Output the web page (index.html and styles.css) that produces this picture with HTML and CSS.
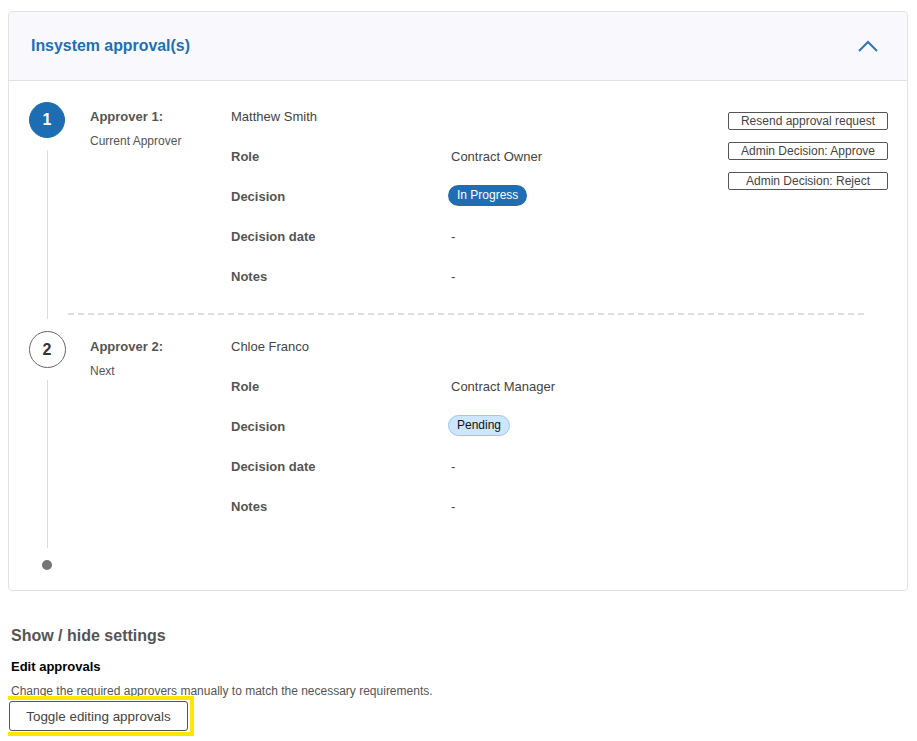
FILE: index.html
```html
<!DOCTYPE html>
<html>
    <head>
        <title>Insystem approvals</title>
        <link rel="stylesheet" href="styles.css">
    </head>
    <body>
        <div class="card">
            <div class="card-header">
                <h2 class="card-title">Insystem approval(s)</h2>
                <svg class="chevron" width="20" height="12" viewBox="0 0 20 12">
                    <polyline points="1,11 10,2 19,11" fill="none" stroke="#2f76bb" stroke-width="2" />
                </svg>
            </div>
            <div class="card-body">
                <div class="step">
                    <div class="step-track">
                        <div class="step-num current">1</div>
                        <div class="step-line"></div>
                    </div>
                    <div class="step-main">
                        <div class="step-content">
                            <div class="approver">
                                <div class="approver-title">Approver 1:</div>
                                <div class="approver-sub">Current Approver</div>
                            </div>
                            <div class="details">
                                <div class="detail-name">Matthew Smith</div>
                                <div></div>
                                <div class="detail-key">Role</div>
                                <div class="detail-val">Contract Owner</div>
                                <div class="detail-key">Decision</div>
                                <div class="detail-val"><span class="pill pill-progress">In Progress</span></div>
                                <div class="detail-key">Decision date</div>
                                <div class="detail-val">-</div>
                                <div class="detail-key">Notes</div>
                                <div class="detail-val">-</div>
                            </div>
                            <div class="actions">
                                <button class="btn-small">Resend approval request</button>
                                <button class="btn-small">Admin Decision: Approve</button>
                                <button class="btn-small">Admin Decision: Reject</button>
                            </div>
                        </div>
                        <div class="step-divider"></div>
                    </div>
                </div>
                <div class="step step-last">
                    <div class="step-track">
                        <div class="step-num">2</div>
                        <div class="step-line"></div>
                    </div>
                    <div class="step-main">
                        <div class="step-content">
                            <div class="approver">
                                <div class="approver-title">Approver 2:</div>
                                <div class="approver-sub">Next</div>
                            </div>
                            <div class="details">
                                <div class="detail-name">Chloe Franco</div>
                                <div></div>
                                <div class="detail-key">Role</div>
                                <div class="detail-val">Contract Manager</div>
                                <div class="detail-key">Decision</div>
                                <div class="detail-val"><span class="pill pill-pending">Pending</span></div>
                                <div class="detail-key">Decision date</div>
                                <div class="detail-val">-</div>
                                <div class="detail-key">Notes</div>
                                <div class="detail-val">-</div>
                            </div>
                        </div>
                        <div class="step-divider"></div>
                    </div>
                </div>
                <div class="step-end"></div>
            </div>
        </div>

        <div class="settings">
            <h3 class="settings-title">Show / hide settings</h3>
            <h4 class="settings-sub">Edit approvals</h4>
            <p class="settings-text">Change the required approvers manually to match the necessary requirements.</p>
            <div class="focus-ring">
                <button class="btn-toggle">Toggle editing approvals</button>
            </div>
        </div>
    </body>
</html>
```

FILE: styles.css
```css
* {
    margin: 0;
    padding: 0;
    box-sizing: border-box;
}

body {
    margin: 11px 9px 0 8px;
    font-family: "Liberation Sans", Arial, sans-serif;
    color: #444;
    background: #fff;
}

.card {
    border: 1px solid #e2e2e2;
    border-radius: 4px;
}

.card-header {
    height: 69px;
    padding: 0 29px 0 22px;
    display: flex;
    align-items: center;
    justify-content: space-between;
    background: #f9f9fd;
    border-bottom: 1px solid #e2e2e2;
    border-radius: 4px 4px 0 0;
}
.card-title {
    font-size: 15.9px;
    font-weight: bold;
    color: #1f6fb5;
}
.chevron {
    display: block;
}

.card-body {
    padding: 21px 19px 20px 20px;
}

.step {
    display: flex;
}
.step-track {
    width: 36px;
    display: flex;
    flex-direction: column;
    align-items: center;
}
.step-num {
    width: 37px;
    height: 37px;
    border-radius: 50%;
    border: 1px solid #666;
    display: flex;
    align-items: center;
    justify-content: center;
    font-size: 16px;
    font-weight: bold;
    color: #333;
}
.step-num.current {
    width: 36px;
    height: 36px;
    background: #1d6db2;
    border-color: #1d6db2;
    color: #fff;
}
.step-line {
    flex: 1;
    width: 1px;
    margin: 12px 0;
    background: #dcdcdc;
}

.step-main {
    flex: 1;
    padding-left: 3px;
}
.step-content {
    display: flex;
    padding: 5px 0 0 22px;
    font-size: 13px;
    line-height: 20px;
}
.step-last .step-content {
    padding-top: 6px;
}
.step-divider {
    height: 2px;
    margin: 26px 20px 16px 0;
    background: repeating-linear-gradient(to right, #dddddd 0 6px, transparent 6px 10px);
}
.step-last .step-divider {
    margin-bottom: 15px;
    background: none;
}

.approver {
    width: 141px;
    color: #555;
}
.approver-title {
    font-weight: bold;
}
.approver-sub {
    margin-top: 4px;
    font-size: 12px;
}

.details {
    display: grid;
    grid-template-columns: 220px 200px;
    row-gap: 20px;
}
.detail-name {
    color: #444;
}
.detail-key {
    font-weight: bold;
    color: #555;
}
.detail-val {
    color: #444;
}

.pill {
    display: inline-block;
    margin: -2px 0 0 -3px;
    height: 21px;
    padding: 0 9px;
    border-radius: 11px;
    font-size: 12px;
    line-height: 21px;
    vertical-align: top;
}
.pill-progress {
    background: #1f6db3;
    color: #fff;
}
.pill-pending {
    background: #cde6fb;
    border: 1px solid #98c8ef;
    line-height: 19px;
    color: #111;
    padding: 0 8px;
}

.actions {
    margin-left: auto;
    margin-top: 5px;
    display: flex;
    flex-direction: column;
    gap: 12px;
}
.btn-small {
    width: 160px;
    height: 18px;
    background: #fff;
    border: 1px solid #555;
    border-radius: 2px;
    font-family: "Liberation Sans", Arial, sans-serif;
    font-size: 12px;
    color: #444;
}

.step-end {
    width: 10px;
    height: 10px;
    margin-left: 13px;
    border-radius: 50%;
    background: #757575;
}

.settings {
    margin: 35px 0 0 1px;
}
.settings-title {
    padding-left: 2px;
    font-size: 16px;
    line-height: 20px;
    color: #555;
}
.settings-sub {
    margin-top: 11px;
    padding-left: 2px;
    font-size: 13px;
    line-height: 20px;
    color: #000;
}
.settings-text {
    margin-top: 4px;
    padding-left: 2px;
    font-size: 12px;
    line-height: 20px;
    color: #555;
}
.focus-ring {
    display: inline-block;
    margin: -5px 0 0 -6px;
    padding: 1px 2px;
    border: 4px solid #ffe600;
}
.btn-toggle {
    display: block;
    width: 179px;
    height: 30px;
    background: #fff;
    border: 1px solid #555;
    border-radius: 3px;
    font-family: "Liberation Sans", Arial, sans-serif;
    font-size: 13.4px;
    color: #444;
}
```
